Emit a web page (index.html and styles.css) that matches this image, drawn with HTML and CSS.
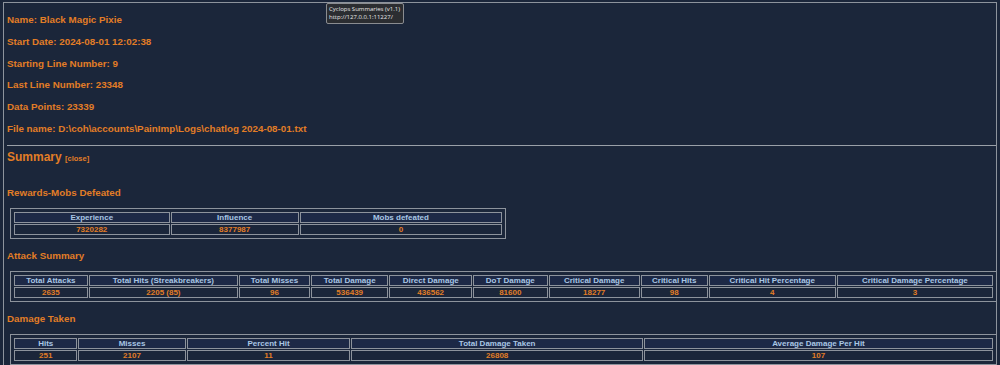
FILE: index.html
```html
<!DOCTYPE html>
<html>
<head>
<meta charset="utf-8">
<link rel="stylesheet" href="styles.css">
</head>
<body>
<div class="page">
  <p>Name: Black Magic Pixie</p>
  <p>Start Date: 2024-08-01 12:02:38</p>
  <p>Starting Line Number: 9</p>
  <p>Last Line Number: 23348</p>
  <p>Data Points: 23339</p>
  <p>File name: D:\coh\accounts\PainImp\Logs\chatlog 2024-08-01.txt</p>
  <hr class="rule">
  <h2 class="summary">Summary <span class="close">[close]</span></h2>

  <h3>Rewards-Mobs Defeated</h3>
  <table class="stats half">
    <colgroup><col class="r1"><col class="r2"><col class="r3"></colgroup>
    <tr><th>Experience</th><th>Influence</th><th>Mobs defeated</th></tr>
    <tr><td>7320282</td><td>8377987</td><td>0</td></tr>
  </table>

  <h3>Attack Summary</h3>
  <table class="stats full">
    <colgroup><col class="a1"><col class="a2"><col class="a3"><col class="a4"><col class="a5"><col class="a6"><col class="a7"><col class="a8"><col class="a9"><col class="a10"></colgroup>
    <tr><th>Total Attacks</th><th>Total Hits (Streakbreakers)</th><th>Total Misses</th><th>Total Damage</th><th>Direct Damage</th><th>DoT Damage</th><th>Critical Damage</th><th>Critical Hits</th><th>Critical Hit Percentage</th><th>Critical Damage Percentage</th></tr>
    <tr><td>2635</td><td>2205 (85)</td><td>96</td><td>536439</td><td>436562</td><td>81600</td><td>18277</td><td>98</td><td>4</td><td>3</td></tr>
  </table>

  <h3>Damage Taken</h3>
  <table class="stats full">
    <colgroup><col class="d1"><col class="d2"><col class="d3"><col class="d4"><col class="d5"></colgroup>
    <tr><th>Hits</th><th>Misses</th><th>Percent Hit</th><th>Total Damage Taken</th><th>Average Damage Per Hit</th></tr>
    <tr><td>251</td><td>2107</td><td>11</td><td>26808</td><td>107</td></tr>
  </table>
</div>
<div class="tooltip">
  <div>Cyclops Summaries (v1.1)</div>
  <div>http://127.0.0.1:11227/</div>
</div>
</body>
</html>
```

FILE: styles.css
```css
html, body {
  background: #1b263a;
}
body {
  margin: 2px 3px;
  font-family: "Liberation Sans", Arial, sans-serif;
  color: #e27d26;
  overflow: hidden;
}
.page {
  border: 1px solid #8d939c;
  border-bottom: none;
  padding: 0 0 20px 3px;
  min-height: 380px;
}
p {
  font-size: 9.8px;
  font-weight: bold;
  line-height: 12px;
  margin: 9.8px 0;
}
.page > p:first-child {
  margin-top: 11px;
}
.rule {
  border: none;
  border-top: 1px solid #9aa0a8;
  height: 0;
  margin: 9px 0 4px 0;
}
.summary {
  font-size: 12px;
  line-height: 14px;
  margin: 0 0 21px 0;
}
.close {
  font-size: 7.5px;
}
h3 {
  font-size: 9.8px;
  line-height: 12px;
  margin: 11px 0 9px 0;
}
.stats {
  border: 1px solid #8d939c;
  border-spacing: 1px;
  padding: 2px;
  margin-left: 3px;
  font-size: 8px;
  font-weight: bold;
  table-layout: fixed;
}
.half {
  width: 496px;
}
.full {
  width: calc(100% - 2px);
}
.stats th, .stats td {
  border: 1px solid #8d939c;
  padding: 0 2px;
  line-height: 9px;
  height: 9px;
  text-align: center;
  white-space: nowrap;
  overflow: hidden;
}
.stats th {
  background: #1d2946;
  color: #a9c6e4;
}
.stats td {
  color: #e27d26;
}
.r1 { width: 32%; }
.r2 { width: 26.4%; }
.r3 { width: 41.6%; }

.a1 { width: 7.6%; }
.a2 { width: 15.4%; }
.a3 { width: 7.3%; }
.a4 { width: 8.0%; }
.a5 { width: 8.5%; }
.a6 { width: 7.7%; }
.a7 { width: 9.4%; }
.a8 { width: 6.9%; }
.a9 { width: 13.1%; }
.a10 { width: 16.1%; }

.d1 { width: 6.5%; }
.d2 { width: 11%; }
.d3 { width: 16.8%; }
.d4 { width: 29.9%; }
.d5 { width: 35.8%; }

.tooltip {
  position: absolute;
  left: 326px;
  top: 3px;
  width: 73px;
  padding: 1px 1px 2px 2px;
  background: #2b2d31;
  border: 1px solid #8a8c90;
  border-radius: 2px;
  color: #e8e8e8;
  font-family: "Open Sans", "Liberation Sans", sans-serif;
  font-size: 6px;
  line-height: 8px;
  white-space: nowrap;
}
```
